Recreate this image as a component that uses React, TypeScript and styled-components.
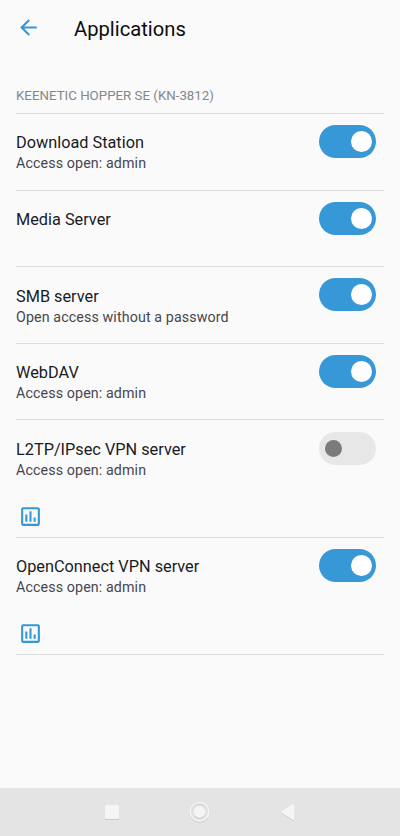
import React from "react";
import styled, { createGlobalStyle } from "styled-components";

const GlobalStyle = createGlobalStyle`
  * { box-sizing: border-box; }
  body { margin: 0; background: #fafafa; font-family: Roboto, sans-serif; }
`;

const Screen = styled.div`
  width: 400px;
  height: 836px;
  display: flex;
  flex-direction: column;
  background: #fafafa;
  overflow: hidden;
`;

const AppBar = styled.header`
  display: flex;
  align-items: center;
  height: 57px;
  padding-left: 16px;
`;

const BackButton = styled.button`
  width: 25px;
  height: 25px;
  margin: 0 33px 2px 0;
  padding: 0;
  border: 0;
  background: none;
  color: #3498d8;
  svg { display: block; }
`;

const PageTitle = styled.h1`
  margin: 0;
  font-size: 20.2px;
  line-height: 24px;
  font-weight: 400;
  color: #0c0c0c;
`;

const Content = styled.main`
  flex: 1;
  padding: 0 16px;
`;

const DeviceName = styled.h2`
  margin: 0;
  height: 57px;
  padding-top: 29px;
  border-bottom: 1px solid #dcdcdc;
  font-size: 13.3px;
  line-height: 20px;
  font-weight: 400;
  color: #85868a;
`;

const Row = styled.section<{ $tall: boolean }>`
  display: flex;
  justify-content: space-between;
  height: ${(p) => (p.$tall ? 117.4 : 76.6)}px;
  padding: 11px 8px 0 0;
  border-bottom: 1px solid #dedede;
`;

const Details = styled.div`
  display: flex;
  flex-direction: column;
  align-items: flex-start;
  padding-top: 7.35px;
`;

const AppName = styled.div`
  font-size: 16.3px;
  line-height: 22px;
  color: #1b1b1f;
`;

const AppStatus = styled.div`
  margin-top: -1px;
  font-size: 14.25px;
  line-height: 20px;
  letter-spacing: 0.11px;
  color: #47464f;
`;

const StatsButton = styled.button`
  margin: 24px 0 0 2px;
  padding: 0;
  border: 0;
  background: none;
  color: #3498d8;
  svg { display: block; }
`;

const Toggle = styled.button<{ $on: boolean }>`
  display: flex;
  align-items: center;
  justify-content: ${(p) => (p.$on ? "flex-end" : "flex-start")};
  width: ${(p) => (p.$on ? 57.5 : 57)}px;
  height: 33px;
  margin-top: ${(p) => (p.$on ? 0 : 0.4)}px;
  padding: 0 ${(p) => (p.$on ? 4 : 6)}px;
  border: 0;
  border-radius: 17px;
  background: ${(p) => (p.$on ? "#3798d8" : "#e7e7e7")};
`;

const Thumb = styled.span<{ $on: boolean }>`
  width: ${(p) => (p.$on ? 21 : 17)}px;
  height: ${(p) => (p.$on ? 21 : 17)}px;
  border-radius: 50%;
  background: ${(p) => (p.$on ? "#ffffff" : "#7b7b7b")};
`;

const NavBar = styled.nav`
  display: grid;
  grid-template-columns: repeat(3, 88px);
  justify-content: center;
  align-items: center;
  justify-items: center;
  height: 48px;
  background: #e4e4e4;
  svg { display: block; filter: drop-shadow(0 1px 0.5px #cccccc); }
`;

const BackIcon = () => (
  <svg width="25" height="25" viewBox="0 0 24 24" fill="currentColor">
    <path d="M20 11H7.83l5.59-5.59L12 4l-8 8 8 8 1.41-1.41L7.83 13H20v-2z" />
  </svg>
);

const StatsIcon = () => (
  <svg width="25" height="25" viewBox="0 0 24 24" fill="currentColor">
    <path d="M9 17H7v-7h2v7zm4 0h-2V7h2v10zm4 0h-2v-4h2v4zm2 2H5V5h14v14zm0-16H5c-1.1 0-2 .9-2 2v14c0 1.1.9 2 2 2h14c1.1 0 2-.9 2-2V5c0-1.1-.9-2-2-2z" />
  </svg>
);

const apps = [
  { name: "Download Station", status: "Access open: admin", on: true, stats: false },
  { name: "Media Server", status: "", on: true, stats: false },
  { name: "SMB server", status: "Open access without a password", on: true, stats: false },
  { name: "WebDAV", status: "Access open: admin", on: true, stats: false },
  { name: "L2TP/IPsec VPN server", status: "Access open: admin", on: false, stats: true },
  { name: "OpenConnect VPN server", status: "Access open: admin", on: true, stats: true },
];

export default function App() {
  return (
    <Screen>
      <GlobalStyle />
      <AppBar>
        <BackButton aria-label="Back"><BackIcon /></BackButton>
        <PageTitle>Applications</PageTitle>
      </AppBar>
      <Content>
        <DeviceName>KEENETIC HOPPER SE (KN-3812)</DeviceName>
        {apps.map((app) => (
          <Row key={app.name} $tall={app.stats}>
            <Details>
              <AppName>{app.name}</AppName>
              {app.status && <AppStatus>{app.status}</AppStatus>}
              {app.stats && <StatsButton aria-label="Statistics"><StatsIcon /></StatsButton>}
            </Details>
            <Toggle role="switch" aria-checked={app.on} aria-label={app.name} $on={app.on}>
              <Thumb $on={app.on} />
            </Toggle>
          </Row>
        ))}
      </Content>
      <NavBar>
        <svg width="16" height="16" viewBox="0 0 16 16">
          <rect x="1" y="1" width="14" height="14" rx="2" fill="#f5f5f5" />
        </svg>
        <svg width="22" height="22" viewBox="0 0 22 22">
          <circle cx="10.5" cy="11" r="9.2" fill="none" stroke="#f5f5f5" strokeWidth="1.5" />
          <circle cx="10.5" cy="11" r="5.8" fill="#f5f5f5" />
        </svg>
        <svg width="16" height="18" viewBox="0 0 16 18">
          <path d="M14 0.500v17L0.300 9z" fill="#f5f5f5" />
        </svg>
      </NavBar>
    </Screen>
  );
}
